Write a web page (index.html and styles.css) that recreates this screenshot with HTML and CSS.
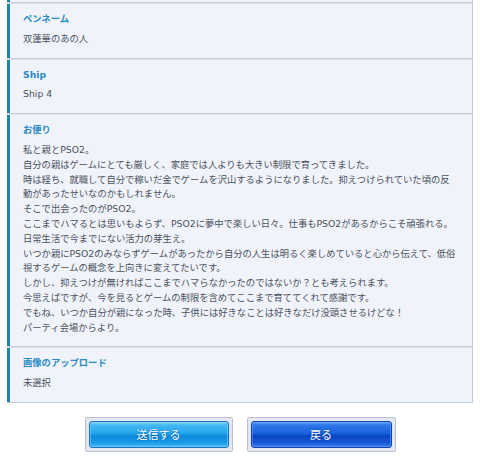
FILE: index.html
```html
<!DOCTYPE html>
<html lang="ja">
<head>
<meta charset="utf-8">
<title>確認</title>
<link rel="stylesheet" href="styles.css">
</head>
<body>
<div class="form">
  <div class="row row-tail"><div class="cell"></div></div>
  <div class="row">
    <div class="cell">
      <div class="label">ペンネーム</div>
      <div class="value">双蓮華のあの人</div>
    </div>
  </div>
  <div class="row">
    <div class="cell">
      <div class="label">Ship</div>
      <div class="value">Ship 4</div>
    </div>
  </div>
  <div class="row">
    <div class="cell">
      <div class="label">お便り</div>
      <div class="value">私と親とPSO2。<br>自分の親はゲームにとても厳しく、家庭では人よりも大きい制限で育ってきました。<br>時は経ち、就職して自分で稼いだ金でゲームを沢山するようになりました。抑えつけられていた頃の反動があったせいなのかもしれません。<br>そこで出会ったのがPSO2。<br>ここまでハマるとは思いもよらず、PSO2に夢中で楽しい日々。仕事もPSO2があるからこそ頑張れる。<br>日常生活で今までにない活力の芽生え。<br>いつか親にPSO2のみならずゲームがあったから自分の人生は明るく楽しめていると心から伝えて、低俗視するゲームの概念を上向きに変えてたいです。<br>しかし、抑えつけが無ければここまでハマらなかったのではないか？とも考えられます。<br>今思えばですが、今を見るとゲームの制限を含めてここまで育ててくれて感謝です。<br>でもね、いつか自分が親になった時、子供には好きなことは好きなだけ没頭させるけどな！<br>パーティ会場からより。</div>
    </div>
  </div>
  <div class="row">
    <div class="cell">
      <div class="label">画像のアップロード</div>
      <div class="value">未選択</div>
    </div>
  </div>
</div>
<div class="actions">
  <span class="btn-frame"><button type="button" class="btn btn-submit">送信する</button></span>
  <span class="btn-frame"><button type="button" class="btn btn-back">戻る</button></span>
</div>
</body>
</html>
```
FILE: styles.css
```css
html, body {
  margin: 0;
  background: #ffffff;
}
body {
  padding: 0 7px;
  font-family: "DejaVu Sans", "Noto Sans CJK JP", sans-serif;
  font-size: 9.3px;
  line-height: 14.8px;
  color: #4a515e;
}
.row {
  background: #f0f3fa;
  border-top: 1px solid #dde2ec;
  border-bottom: 1px solid #c5ccd9;
  border-right: 1px solid #c5ccd9;
}
.row-tail {
  border-top: 0;
}
.cell {
  border-left: 3px solid #1a84a8;
  padding: 8px 15px 11px 13px;
}
.row-tail .cell {
  height: 2px;
  padding: 0;
}
.label {
  font-weight: bold;
  color: #2a8bc2;
  margin-bottom: 5px;
}
.actions {
  display: flex;
  justify-content: center;
  gap: 14px;
  margin-top: 14px;
}
.btn-frame {
  display: block;
  padding: 3px;
  border: 1px solid #b9c1d0;
  border-radius: 2px;
  background: linear-gradient(to bottom, #e6e9f1 0%, #dde2ec 50%, #e6e9f1 100%);
}
.btn {
  display: block;
  width: 140px;
  height: 27px;
  margin: 0;
  padding: 0;
  border-radius: 3px;
  color: #ffffff;
  font-family: "Noto Sans CJK JP", sans-serif;
  font-size: 11px;
  line-height: 25px;
  text-shadow: 0 0 2px rgba(0, 40, 110, 0.6);
  cursor: pointer;
}
.btn-submit {
  border: 1px solid #1a74c6;
  background: linear-gradient(to bottom, #8ad6fb 0%, #45b9f3 12%, #23a6ed 45%, #0c8bdc 55%, #1a9ae8 82%, #4cbaf5 100%);
  box-shadow: inset 0 0 0 1px rgba(140, 215, 255, 0.5);
}
.btn-back {
  width: 141px;
  border: 1px solid #1043b0;
  background: linear-gradient(to bottom, #6aa6f6 0%, #2f78ea 12%, #1a62dc 45%, #0a45bf 55%, #1656d4 82%, #3a80f0 100%);
  box-shadow: inset 0 0 0 1px rgba(120, 170, 255, 0.45);
}
```
